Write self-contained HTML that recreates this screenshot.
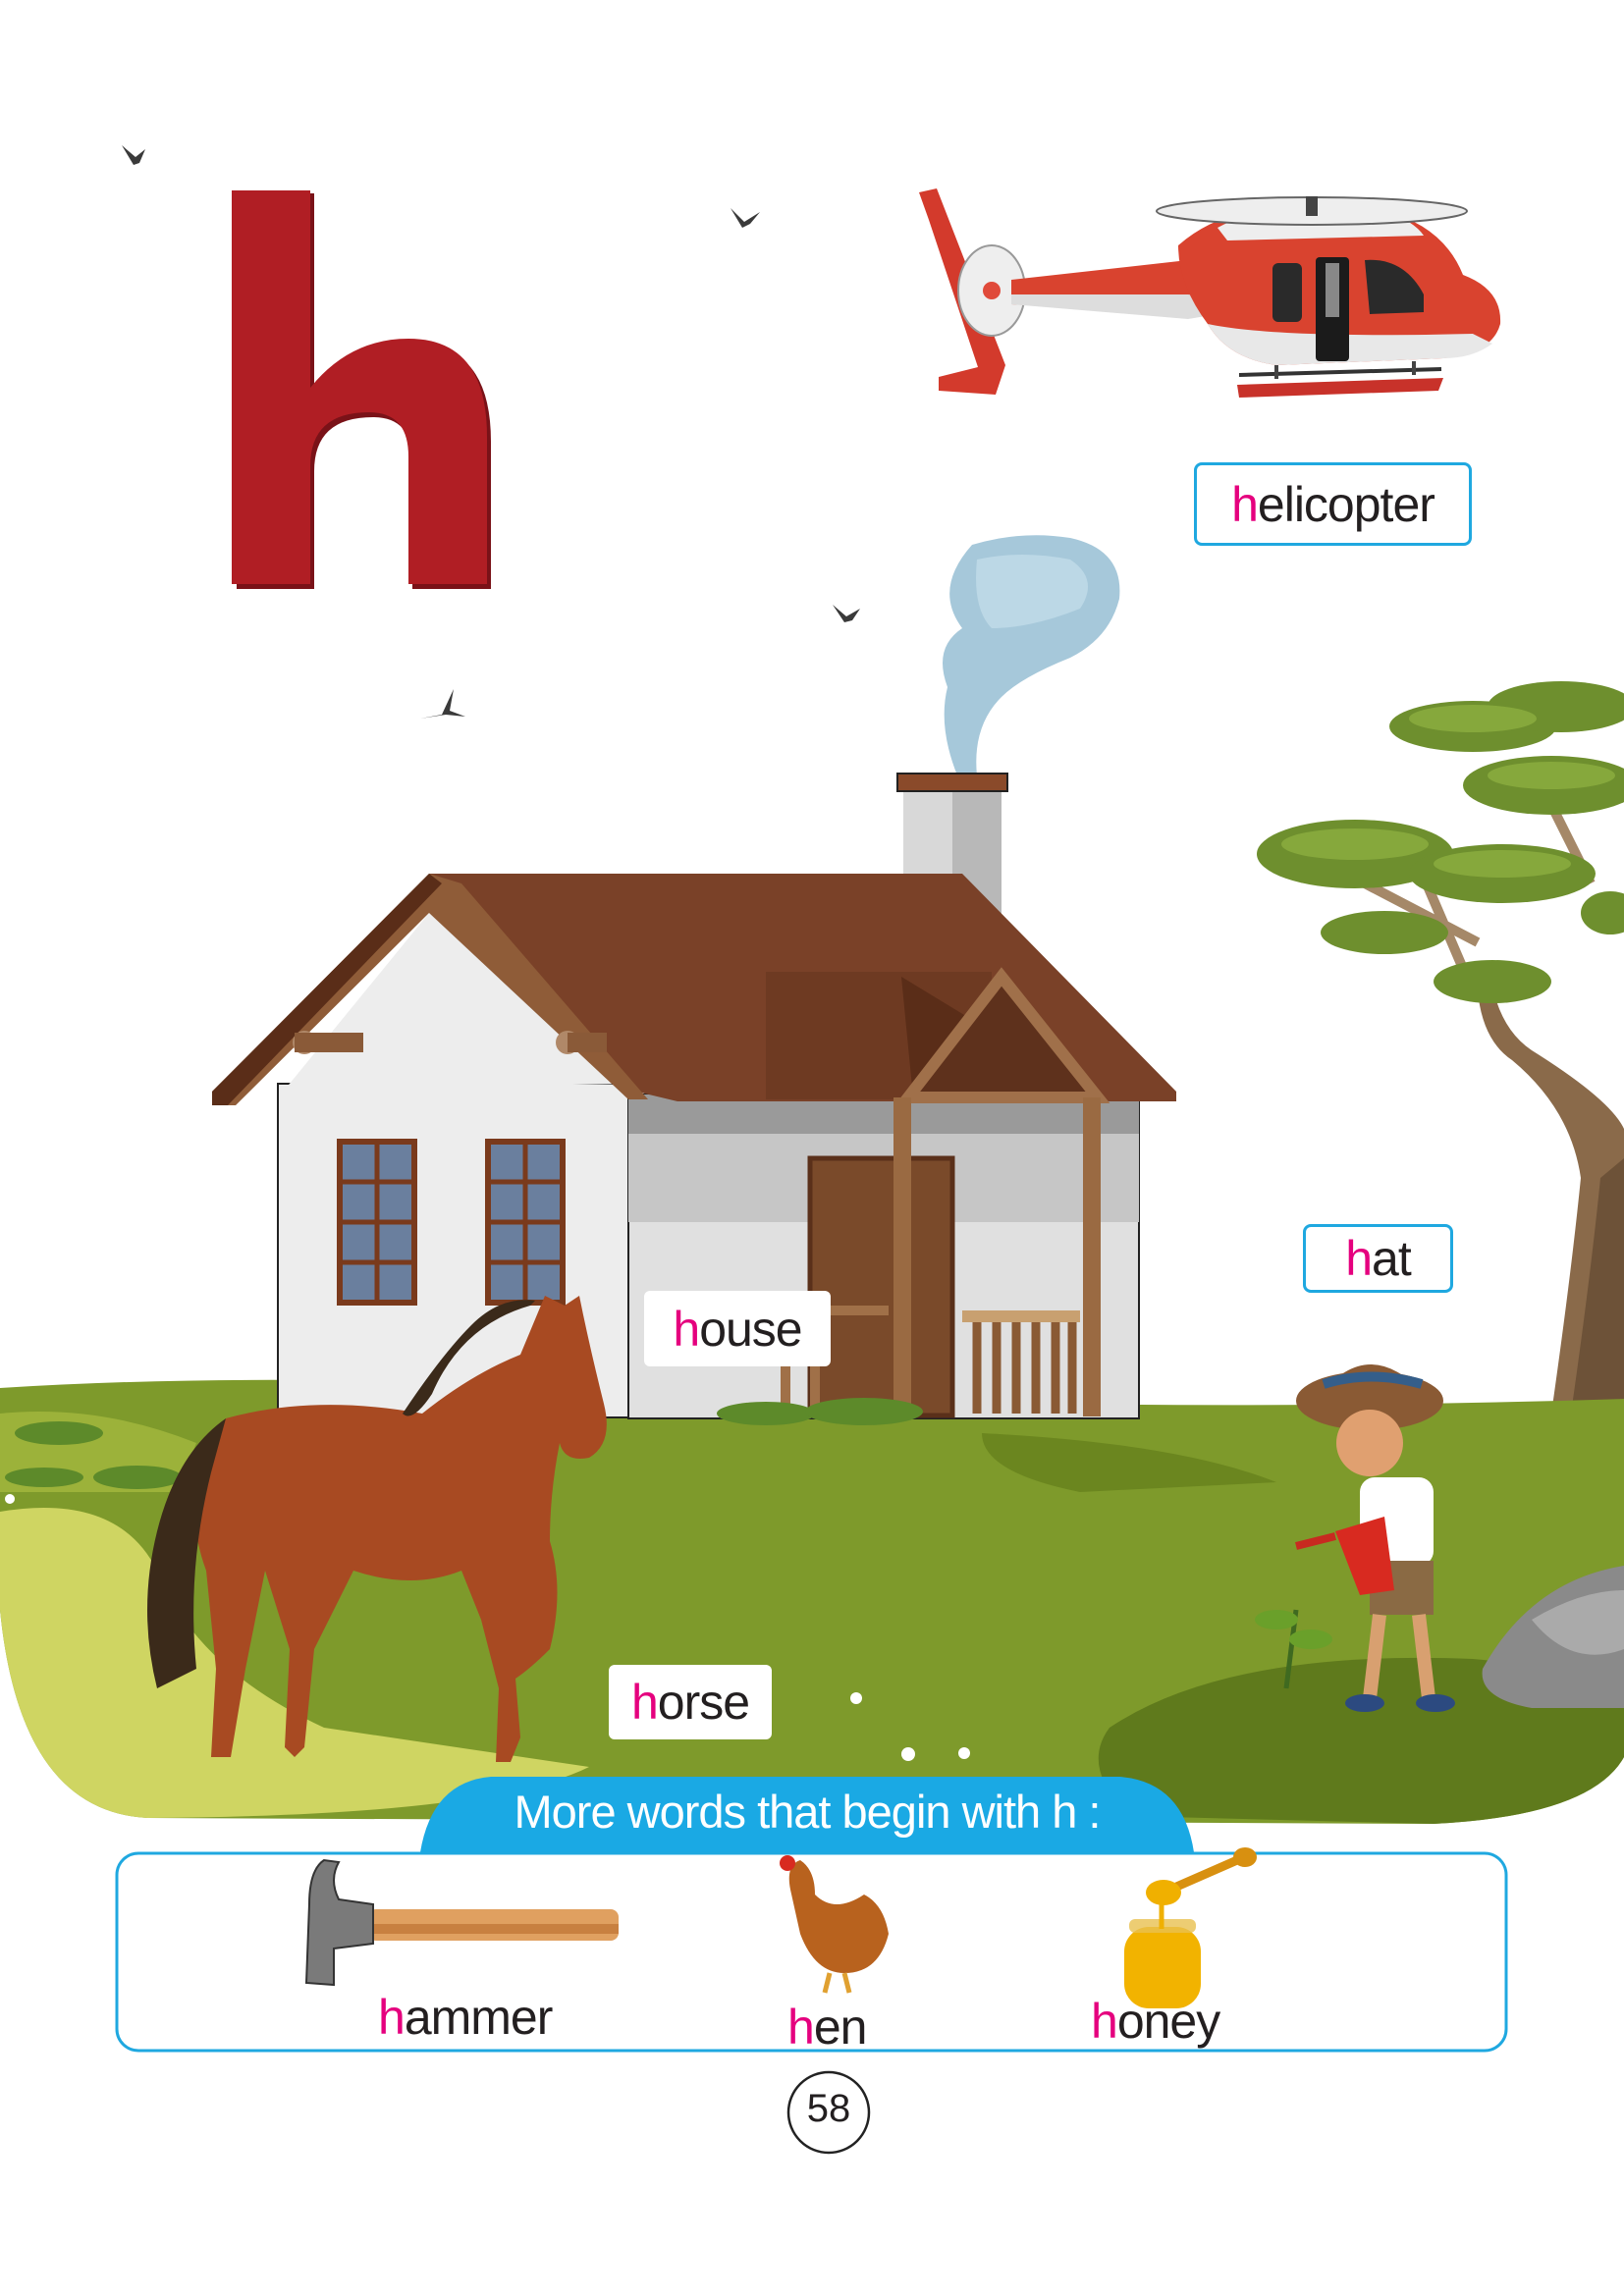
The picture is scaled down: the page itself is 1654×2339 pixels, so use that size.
<!DOCTYPE html>
<html><head><meta charset="utf-8"><style>
html,body{margin:0;padding:0;background:#fff}
body{width:1654px;height:2339px;position:relative;overflow:hidden;font-family:"Liberation Sans",sans-serif}
svg{position:absolute;left:0;top:0}
.lbl{position:absolute;box-sizing:border-box;background:#fff;color:#231f20;display:flex;align-items:center;justify-content:center;font-size:50px;letter-spacing:-1px}
.lbl b{font-weight:normal;color:#e5007e}
.bd{border:3px solid #1fa8e0;border-radius:8px}
.w{position:absolute;font-size:50px;color:#231f20;letter-spacing:-1px}
.w b{font-weight:normal;color:#e5007e}
</style></head><body>
<svg width="1654" height="2339" viewBox="0 0 1654 2339">
<!-- big h -->
<path d="M241 197 H320 V400 Q360 350 420 350 Q500 350 500 450 V600 H420 V470 Q420 425 380 425 Q320 425 320 480 V600 H241 Z" fill="#7a1218"/>
<path d="M236 194 H316 V395 Q356 345 416 345 Q496 345 496 445 V595 H416 V465 Q416 420 376 420 Q316 420 316 475 V595 H236 Z" fill="#b01e24"/>
<!-- birds -->
<g fill="#3a3a3a">
<path d="M124 148 l14 12 l10 -8 l-6 14 l-6 2 z"/>
<path d="M744 212 l14 14 l16 -10 l-10 12 l-8 4 z"/>
<path d="M848 616 l14 12 l14 -8 l-8 12 l-8 2 z"/>
<path d="M428 732 l22 -4 l12 -26 l-4 22 l16 6 l-20 -2 z"/>
</g>
<!-- helicopter -->
<g>
<path d="M936 196 l18 -4 l70 180 l-10 30 l-58 -4 l0 -14 l40 -10 l-50 -150 z" fill="#d33a2c"/>
<ellipse cx="1010" cy="296" rx="34" ry="46" fill="#eee" stroke="#999" stroke-width="2"/>
<circle cx="1010" cy="296" r="9" fill="#e04a3a"/>
<path d="M1030 285 L1210 265 L1270 240 L1300 300 L1210 320 L1030 310 Z" fill="#d9432f"/>
<path d="M1030 300 L1210 300 L1300 310 L1210 325 L1030 310 Z" fill="#ddd"/>
<path d="M1200 250 Q1240 215 1300 212 L1410 215 Q1470 230 1490 280 Q1530 295 1528 330 Q1520 360 1470 365 L1300 372 Q1250 365 1230 330 Q1200 290 1200 250 Z" fill="#d9432f"/>
<path d="M1240 232 Q1280 210 1360 210 L1410 215 Q1440 225 1450 240 L1250 245 Z" fill="#eee"/>
<path d="M1230 330 Q1300 345 1500 340 L1520 350 Q1500 365 1470 365 L1300 372 Q1250 365 1230 330Z" fill="#e8e8e8"/>
<rect x="1296" y="268" width="30" height="60" rx="6" fill="#2a2a2a"/>
<rect x="1340" y="262" width="34" height="106" rx="4" fill="#1b1b1b"/>
<rect x="1350" y="268" width="14" height="55" fill="#888"/>
<path d="M1390 265 Q1430 262 1450 300 L1450 318 L1395 320 Z" fill="#2a2a2a"/>
<ellipse cx="1336" cy="215" rx="158" ry="14" fill="#eee" stroke="#666" stroke-width="2"/>
<rect x="1330" y="200" width="12" height="20" fill="#444"/>
<path d="M1260 392 L1470 385 L1465 398 L1262 405 Z" fill="#c8322a"/>
<path d="M1262 382 L1468 376" stroke="#333" stroke-width="4"/>
<path d="M1300 372 v14 M1440 368 v14" stroke="#444" stroke-width="4"/>
</g>
<!-- helicopter label border -->
<!-- smoke -->
<path d="M990 555 Q1040 540 1090 548 Q1145 560 1140 610 Q1130 650 1090 670 Q1040 690 1020 710 Q990 740 995 790 L975 790 Q955 740 965 700 Q950 660 980 640 Q950 600 990 555 Z" fill="#a6c8da"/>
<path d="M995 570 Q1040 560 1090 570 Q1120 590 1100 620 Q1050 640 1010 640 Q990 620 995 570Z" fill="#bcd8e6"/>
<!-- tree -->
<g>
<path d="M1580 1440 Q1600 1300 1610 1200 Q1600 1130 1540 1080 Q1510 1060 1505 1010 L1520 1005 Q1530 1050 1560 1070 Q1640 1120 1654 1150 V1445 Z" fill="#8a6a4a"/>
<path d="M1600 1440 Q1620 1300 1630 1200 L1654 1180 V1445 Z" fill="#6d5238"/>
<path d="M1500 1010 L1440 870 M1505 960 L1390 900 M1620 900 L1580 820" stroke="#a58868" stroke-width="10" fill="none"/>
<g fill="#6e8f2e">
<ellipse cx="1500" cy="740" rx="85" ry="26"/>
<ellipse cx="1590" cy="720" rx="75" ry="26"/>
<ellipse cx="1380" cy="870" rx="100" ry="35"/>
<ellipse cx="1530" cy="890" rx="95" ry="30"/>
<ellipse cx="1410" cy="950" rx="65" ry="22"/>
<ellipse cx="1520" cy="1000" rx="60" ry="22"/>
<ellipse cx="1580" cy="800" rx="90" ry="30"/>
<ellipse cx="1640" cy="930" rx="30" ry="22"/>
</g>
<g fill="#86a83c">
<ellipse cx="1500" cy="732" rx="65" ry="14"/><ellipse cx="1380" cy="860" rx="75" ry="16"/><ellipse cx="1530" cy="880" rx="70" ry="14"/><ellipse cx="1580" cy="790" rx="65" ry="14"/>
</g>
</g>
<!-- grass -->
<path d="M0 1414 Q300 1395 700 1420 Q1200 1440 1654 1425 V1790 Q1620 1850 1460 1858 L150 1852 Q20 1845 0 1640 Z" fill="#7e9a2b"/>
<path d="M0 1540 Q120 1520 160 1600 Q200 1700 330 1760 L600 1800 Q500 1850 150 1852 Q20 1845 0 1640Z" fill="#cfd562"/>
<path d="M0 1440 Q100 1430 200 1470 L180 1520 Q80 1520 0 1520Z" fill="#9cb23a"/>
<path d="M1130 1760 Q1250 1680 1500 1690 Q1620 1700 1654 1740 V1790 Q1620 1850 1460 1858 L1150 1850 Q1100 1800 1130 1760Z" fill="#5f7a1c"/>
<path d="M1000 1460 Q1200 1470 1300 1510 L1100 1520 Q1000 1500 1000 1460Z" fill="#6b861f"/>
<!-- chimney -->
<rect x="920" y="800" width="100" height="140" fill="#d8d8d8"/>
<rect x="970" y="800" width="50" height="140" fill="#b8b8b8"/>
<rect x="914" y="788" width="112" height="18" fill="#8a4a2a" stroke="#222" stroke-width="2"/>
<!-- house walls -->
<rect x="283" y="1104" width="360" height="340" fill="#ededed" stroke="#222" stroke-width="2"/>
<path d="M290 1110 L437 930 L640 1104 Z" fill="#ededed"/>
<rect x="640" y="1115" width="520" height="330" fill="#e0e0e0" stroke="#222" stroke-width="2"/>
<rect x="640" y="1115" width="520" height="40" fill="#9a9a9a"/>
<rect x="640" y="1155" width="520" height="90" fill="#c6c6c6"/>
<!-- windows -->
<g fill="#6a7f9e" stroke="#7a3a1c" stroke-width="6">
<rect x="346" y="1163" width="76" height="164"/>
<rect x="497" y="1163" width="76" height="164"/>
</g>
<path d="M384 1163 V1327 M346 1204 H422 M346 1245 H422 M346 1286 H422 M535 1163 V1327 M497 1204 H573 M497 1245 H573 M497 1286 H573" stroke="#7a3a1c" stroke-width="5"/>
<!-- roof -->
<path d="M437 890 L980 890 L1198 1112 L1198 1122 L690 1122 L640 1110 L490 960 Z" fill="#7a4128"/>
<path d="M437 890 L216 1112 L216 1126 L240 1126 L437 930 L640 1120 L660 1120 L470 900 Z" fill="#8f5c38"/>
<path d="M216 1112 L437 890 L450 900 L232 1126 L216 1126Z" fill="#5a2d18"/>
<rect x="780" y="990" width="230" height="130" fill="#6e3a22"/>
<path d="M918 995 L1120 1118 H930 Z" fill="#5a2d18"/>
<path d="M1020 995 L925 1118 H1118 Z" fill="#5e311c" stroke="#a0704a" stroke-width="12"/>
<circle cx="310" cy="1062" r="12" fill="#b08868"/><rect x="300" y="1052" width="70" height="20" fill="#8a5a38"/>
<circle cx="578" cy="1062" r="12" fill="#b08868"/><rect x="578" y="1052" width="40" height="20" fill="#8a5a38"/>
<!-- porch -->
<rect x="825" y="1180" width="145" height="262" fill="#7a4a2a" stroke="#5a301a" stroke-width="5"/>
<rect x="910" y="1118" width="18" height="325" fill="#9a6a42"/>
<rect x="1103" y="1118" width="18" height="325" fill="#9a6a42"/>
<rect x="980" y="1335" width="120" height="12" fill="#c8a070"/>
<path d="M995 1347 V1440 M1015 1347 V1440 M1035 1347 V1440 M1055 1347 V1440 M1075 1347 V1440 M1092 1347 V1440" stroke="#8a5a34" stroke-width="9"/>
<path d="M795 1335 H905 M800 1347 V1440 M830 1347 V1440" stroke="#a07048" stroke-width="10"/>
<g fill="#5d8a2a"><ellipse cx="780" cy="1440" rx="50" ry="12"/><ellipse cx="880" cy="1438" rx="60" ry="14"/><ellipse cx="60" cy="1460" rx="45" ry="12"/><ellipse cx="140" cy="1505" rx="45" ry="12"/><ellipse cx="45" cy="1505" rx="40" ry="10"/></g>
<!-- horse -->
<g>
<path d="M230 1445 Q320 1420 430 1440 Q480 1400 530 1380 L555 1320 L575 1330 L590 1320 Q600 1370 615 1430 Q625 1470 600 1485 Q575 1490 570 1470 Q560 1520 560 1570 Q575 1620 560 1680 Q540 1700 525 1710 L530 1770 L520 1795 L505 1795 L508 1720 L490 1650 L470 1600 Q420 1620 360 1600 L320 1680 L310 1780 L300 1790 L290 1780 L295 1680 L270 1600 L250 1700 L235 1790 L215 1790 L220 1700 L210 1600 Q180 1520 230 1445Z" fill="#a84a22"/>
<path d="M230 1445 Q180 1480 160 1560 Q140 1640 160 1720 L200 1700 Q190 1600 215 1500 Z" fill="#3b2a1a"/>
<path d="M540 1330 Q470 1350 440 1420 Q420 1450 410 1440 Q450 1380 480 1350 Q510 1320 545 1325Z" fill="#3b2a1a"/>
</g>
<!-- boy -->
<g>
<ellipse cx="1395" cy="1427" rx="75" ry="30" fill="#8a5a34"/>
<path d="M1345 1420 Q1395 1360 1450 1420Z" fill="#8a5a34"/>
<path d="M1348 1410 Q1395 1395 1448 1410" stroke="#345e8a" stroke-width="10" fill="none"/>
<circle cx="1395" cy="1470" r="34" fill="#e0a070"/>
<rect x="1385" y="1505" width="75" height="90" rx="15" fill="#fff"/>
<rect x="1395" y="1590" width="65" height="55" fill="#8a6a44"/>
<path d="M1405 1645 L1395 1730 M1445 1645 L1455 1730" stroke="#d8a070" stroke-width="14"/>
<ellipse cx="1390" cy="1735" rx="20" ry="9" fill="#2c4a80"/><ellipse cx="1462" cy="1735" rx="20" ry="9" fill="#2c4a80"/>
<path d="M1360 1560 L1410 1545 L1420 1620 L1385 1625 Z" fill="#d82a20"/>
<path d="M1360 1565 L1320 1575" stroke="#c82a20" stroke-width="8"/>
<path d="M1320 1640 L1310 1720" stroke="#3f6a20" stroke-width="5"/>
<ellipse cx="1300" cy="1650" rx="22" ry="10" fill="#6aa02a"/><ellipse cx="1335" cy="1670" rx="22" ry="10" fill="#6aa02a"/>
</g>
<!-- rock -->
<path d="M1510 1700 Q1560 1610 1654 1595 V1740 L1560 1740 Q1505 1730 1510 1700Z" fill="#8a8a8a"/>
<path d="M1560 1650 Q1610 1620 1654 1620 V1680 Q1600 1700 1560 1650Z" fill="#aaa"/>
<!-- flowers -->
<g fill="#fff"><circle cx="872" cy="1730" r="6"/><circle cx="925" cy="1787" r="7"/><circle cx="982" cy="1786" r="6"/><circle cx="10" cy="1527" r="5"/></g>
<!-- blue tab -->
<path d="M428 1887 Q440 1815 500 1810 L1140 1810 Q1205 1815 1216 1887 Z" fill="#1aa9e4"/>
<rect x="119" y="1888" width="1415" height="201" rx="22" fill="none" stroke="#1fa8e0" stroke-width="3"/>
<!-- hammer -->
<rect x="375" y="1945" width="255" height="32" rx="8" fill="#e0a060"/>
<rect x="375" y="1960" width="255" height="10" fill="#c88040"/>
<path d="M330 1895 Q315 1905 315 1940 L312 2020 L340 2022 L340 1985 L380 1980 L380 1940 L345 1935 Q335 1915 345 1897 Z" fill="#7a7a7a" stroke="#333" stroke-width="2"/>
<!-- hen -->
<path d="M805 1925 Q800 1900 815 1895 Q830 1905 830 1930 Q850 1950 880 1930 Q900 1940 905 1970 Q895 2010 860 2010 Q830 2010 815 1970 Z" fill="#b8621e"/>
<circle cx="802" cy="1898" r="8" fill="#d82a20"/>
<path d="M845 2010 L840 2030 M860 2010 L865 2030" stroke="#e0a030" stroke-width="5"/>
<!-- honey -->
<rect x="1145" y="1963" width="78" height="83" rx="25" fill="#f2b300"/>
<rect x="1150" y="1955" width="68" height="14" rx="6" fill="#e8c050" opacity=".8"/>
<path d="M1180 1930 L1260 1895" stroke="#d89010" stroke-width="9"/>
<ellipse cx="1268" cy="1892" rx="12" ry="10" fill="#d89010"/>
<ellipse cx="1185" cy="1928" rx="18" ry="13" fill="#f0b000"/>
<path d="M1183 1935 V1965" stroke="#f0b000" stroke-width="5"/>
<!-- page number -->
<circle cx="844" cy="2152" r="41" fill="#fff" stroke="#222" stroke-width="2.5"/>
</svg>
<div class="lbl bd" style="left:1216px;top:471px;width:283px;height:85px"><span><b>h</b>elicopter</span></div>
<div class="lbl bd" style="left:1327px;top:1247px;width:153px;height:70px"><span><b>h</b>at</span></div>
<div class="lbl" style="left:656px;top:1315px;width:190px;height:77px;border-radius:6px"><span><b>h</b>ouse</span></div>
<div class="lbl" style="left:620px;top:1696px;width:166px;height:76px;border-radius:6px"><span><b>h</b>orse</span></div>
<div style="position:absolute;left:428px;top:1818px;width:788px;text-align:center;color:#fff;font-size:47px;letter-spacing:-1px">More words that begin with h :</div>
<div class="w" style="left:385px;top:2026px"><b>h</b>ammer</div>
<div class="w" style="left:802px;top:2036px"><b>h</b>en</div>
<div class="w" style="left:1111px;top:2030px"><b>h</b>oney</div>
<div style="position:absolute;left:803px;top:2126px;width:82px;text-align:center;font-size:40px;color:#231f20">58</div>
</body></html>
